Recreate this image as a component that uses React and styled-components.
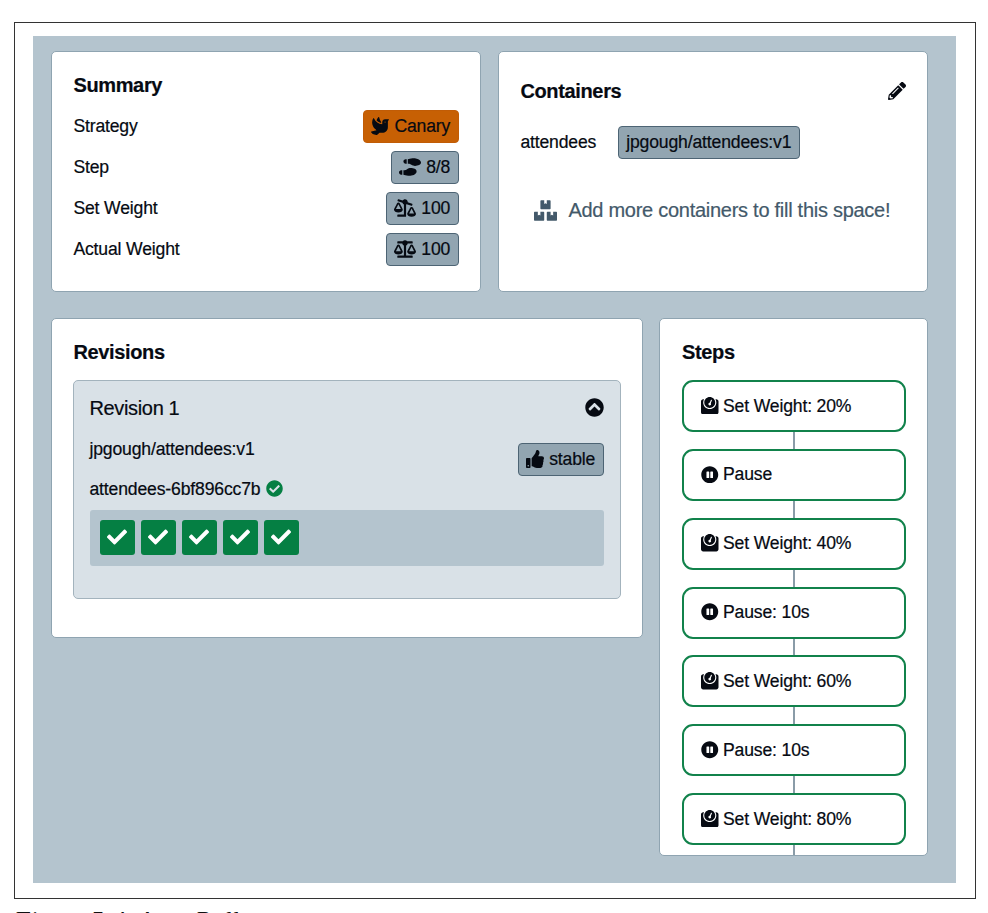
import React from 'react';
import styled, { createGlobalStyle } from 'styled-components';
import {
  FaDove, FaShoePrints, FaBalanceScaleRight, FaBalanceScale, FaPencilAlt, FaBoxes,
  FaChevronCircleUp, FaThumbsUp, FaCheckCircle, FaCheck, FaWeight, FaPauseCircle,
} from 'react-icons/fa';

const Global = createGlobalStyle`
  * { box-sizing: border-box; }
  html, body { margin: 0; height: 913px; overflow: hidden; background: #fff; }
  body {
    font-family: "Liberation Sans", Arial, sans-serif;
    font-size: 17.6px;
    letter-spacing: -0.16px;
    color: #060a12;
    -webkit-text-stroke: 0.2px currentColor;
  }
  svg { display: block; flex: none; }
`;

const Page = styled.main`
  height: 913px;
  padding: 22px 12px 0 14px;
  overflow: hidden;
`;
const Frame = styled.div`
  height: 877px;
  padding: 13px 19px 15px 18px;
  border: 1px solid #333;
`;
const Board = styled.div`
  height: 847px;
  padding: 15px 28px 0 18px;
  background: #b4c4ce;
  display: flex;
  flex-direction: column;
  gap: 26px;
`;
const CardRow = styled.div`
  display: flex;
  align-items: flex-start;
  justify-content: space-between;
`;
const Card = styled.section`
  width: ${(p) => p.$w}px;
  height: ${(p) => p.$h}px;
  padding: ${(p) => p.$top || 22}px 21px 0 ${(p) => p.$left || 21.4}px;
  background: #fff;
  border: 1px solid #8fa4b1;
  border-radius: 5px;
  overflow: hidden;
`;
const Title = styled.h3`
  margin: 0;
  font-size: 20px;
  letter-spacing: -0.35px;
  line-height: 23px;
  font-weight: 700;
`;
const SummaryList = styled.div`
  display: flex;
  flex-direction: column;
  gap: 8px;
  margin-top: 13px;
`;
const SummaryRow = styled.div`
  display: flex;
  align-items: center;
  justify-content: space-between;
  height: 33px;
`;
const Tag = styled.span`
  display: inline-flex;
  align-items: center;
  gap: 5px;
  height: 33px;
  padding: 0 7.8px 0 7px;
  border: 1px solid ${(p) => (p.$canary ? '#c15c06' : '#4d6474')};
  border-radius: 4px;
  background: ${(p) => (p.$canary ? '#c76004' : '#92a5b1')};
  line-height: 31px;
  white-space: nowrap;
  svg { margin-bottom: 2px; }
`;
const Header = styled.div`
  display: flex;
  align-items: center;
  justify-content: space-between;
  > svg { margin-bottom: 1px; }
`;
const ContainerLine = styled.div`
  display: flex;
  align-items: center;
  gap: 22px;
  margin-top: 23px;
`;
const Hint = styled.div`
  display: flex;
  align-items: center;
  gap: 11px;
  margin: 39px 0 0 14px;
  color: #43596a;
  font-size: 20px;
  letter-spacing: -0.27px;
  line-height: 24px;
  white-space: nowrap;
`;
const Revision = styled.div`
  height: 219px;
  margin: 16px 0 0 -0.4px;
  padding: 15px 16px 0 15.5px;
  background: #d9e1e7;
  border: 1px solid #a3b3bd;
  border-radius: 5px;
`;
const RevisionName = styled.span`
  font-size: 20px;
  letter-spacing: -0.35px;
  line-height: 24px;
`;
const RevisionInfo = styled.div`
  display: flex;
  justify-content: space-between;
  align-items: flex-start;
  margin-top: 18px;
  padding-top: 5px;
`;
const ImageName = styled.div`
  margin-top: -5px;
  line-height: 22px;
`;
const ReplicaName = styled.div`
  display: flex;
  align-items: center;
  gap: 6px;
  margin-top: 18px;
  line-height: 22px;
  svg { color: #057f43; margin-bottom: 2px; }
`;
const Pods = styled.div`
  display: flex;
  gap: 6px;
  height: 56px;
  margin-top: 10px;
  padding: 10px;
  background: #b4c4ce;
  border-radius: 3px;
`;
const Pod = styled.span`
  display: flex;
  align-items: center;
  justify-content: center;
  width: 35px;
  height: 35px;
  padding-bottom: 2px;
  border-radius: 3px;
  background: #057f43;
  color: #fff;
`;
const StepList = styled.div`
  display: flex;
  flex-direction: column;
  margin-top: 16px;
`;
const Step = styled.div`
  display: flex;
  align-items: center;
  gap: 4.5px;
  height: 52px;
  padding-left: 17px;
  border: 2px solid #11824b;
  border-radius: 11px;
  white-space: nowrap;
  svg { margin-bottom: 1px; }
`;
const Connector = styled.div`
  width: 2px;
  height: 16.87px;
  margin: 0 auto;
  background: #8a9ca8;
`;
const Caption = styled.p`
  margin: 7px 0 0;
  font: italic 26px/30px "Liberation Serif", serif;
  letter-spacing: 0;
  -webkit-text-stroke: 0;
  color: #111;
  white-space: nowrap;
`;

const summary = [
  ['Strategy', 'Canary', FaDove, 18],
  ['Step', '8/8', FaShoePrints, 22],
  ['Set Weight', '100', FaBalanceScaleRight, 22],
  ['Actual Weight', '100', FaBalanceScale, 22],
];
const steps = ['Set Weight: 20%', 'Pause', 'Set Weight: 40%', 'Pause: 10s', 'Set Weight: 60%', 'Pause: 10s', 'Set Weight: 80%'];

export default function App() {
  return (
    <Page>
      <Global />
      <Frame>
        <Board>
          <CardRow>
            <Card $w={430} $h={241}>
              <Title>Summary</Title>
              <SummaryList>
                {summary.map(([label, value, Icon, size]) => (
                  <SummaryRow key={label}>
                    {label}
                    <Tag $canary={value === 'Canary'}><Icon size={size} />{value}</Tag>
                  </SummaryRow>
                ))}
              </SummaryList>
            </Card>
            <Card $w={430} $h={241} $top={28}>
              <Header><Title>Containers</Title><FaPencilAlt size={18} /></Header>
              <ContainerLine>attendees<Tag>jpgough/attendees:v1</Tag></ContainerLine>
              <Hint><FaBoxes size={23} />Add more containers to fill this space!</Hint>
            </Card>
          </CardRow>
          <CardRow>
            <Card $w={592} $h={320}>
              <Title>Revisions</Title>
              <Revision>
                <Header><RevisionName>Revision 1</RevisionName><FaChevronCircleUp size={19} /></Header>
                <RevisionInfo>
                  <div>
                    <ImageName>jpgough/attendees:v1</ImageName>
                    <ReplicaName>attendees-6bf896cc7b<FaCheckCircle size={17} /></ReplicaName>
                  </div>
                  <Tag><FaThumbsUp size={18} />stable</Tag>
                </RevisionInfo>
                <Pods>{[1, 2, 3, 4, 5].map((n) => <Pod key={n}><FaCheck size={20} /></Pod>)}</Pods>
              </Revision>
            </Card>
            <Card $w={269} $h={538} $left={22}>
              <Title>Steps</Title>
              <StepList>
                {steps.map((step, i) => (
                  <React.Fragment key={i}>
                    <Step>{step.startsWith('Pause') ? <FaPauseCircle size={17.5} /> : <FaWeight size={17.5} />}{step}</Step>
                    <Connector />
                  </React.Fragment>
                ))}
              </StepList>
            </Card>
          </CardRow>
        </Board>
      </Frame>
      <Caption>Figure 5-4. Argo Rollouts</Caption>
    </Page>
  );
}
